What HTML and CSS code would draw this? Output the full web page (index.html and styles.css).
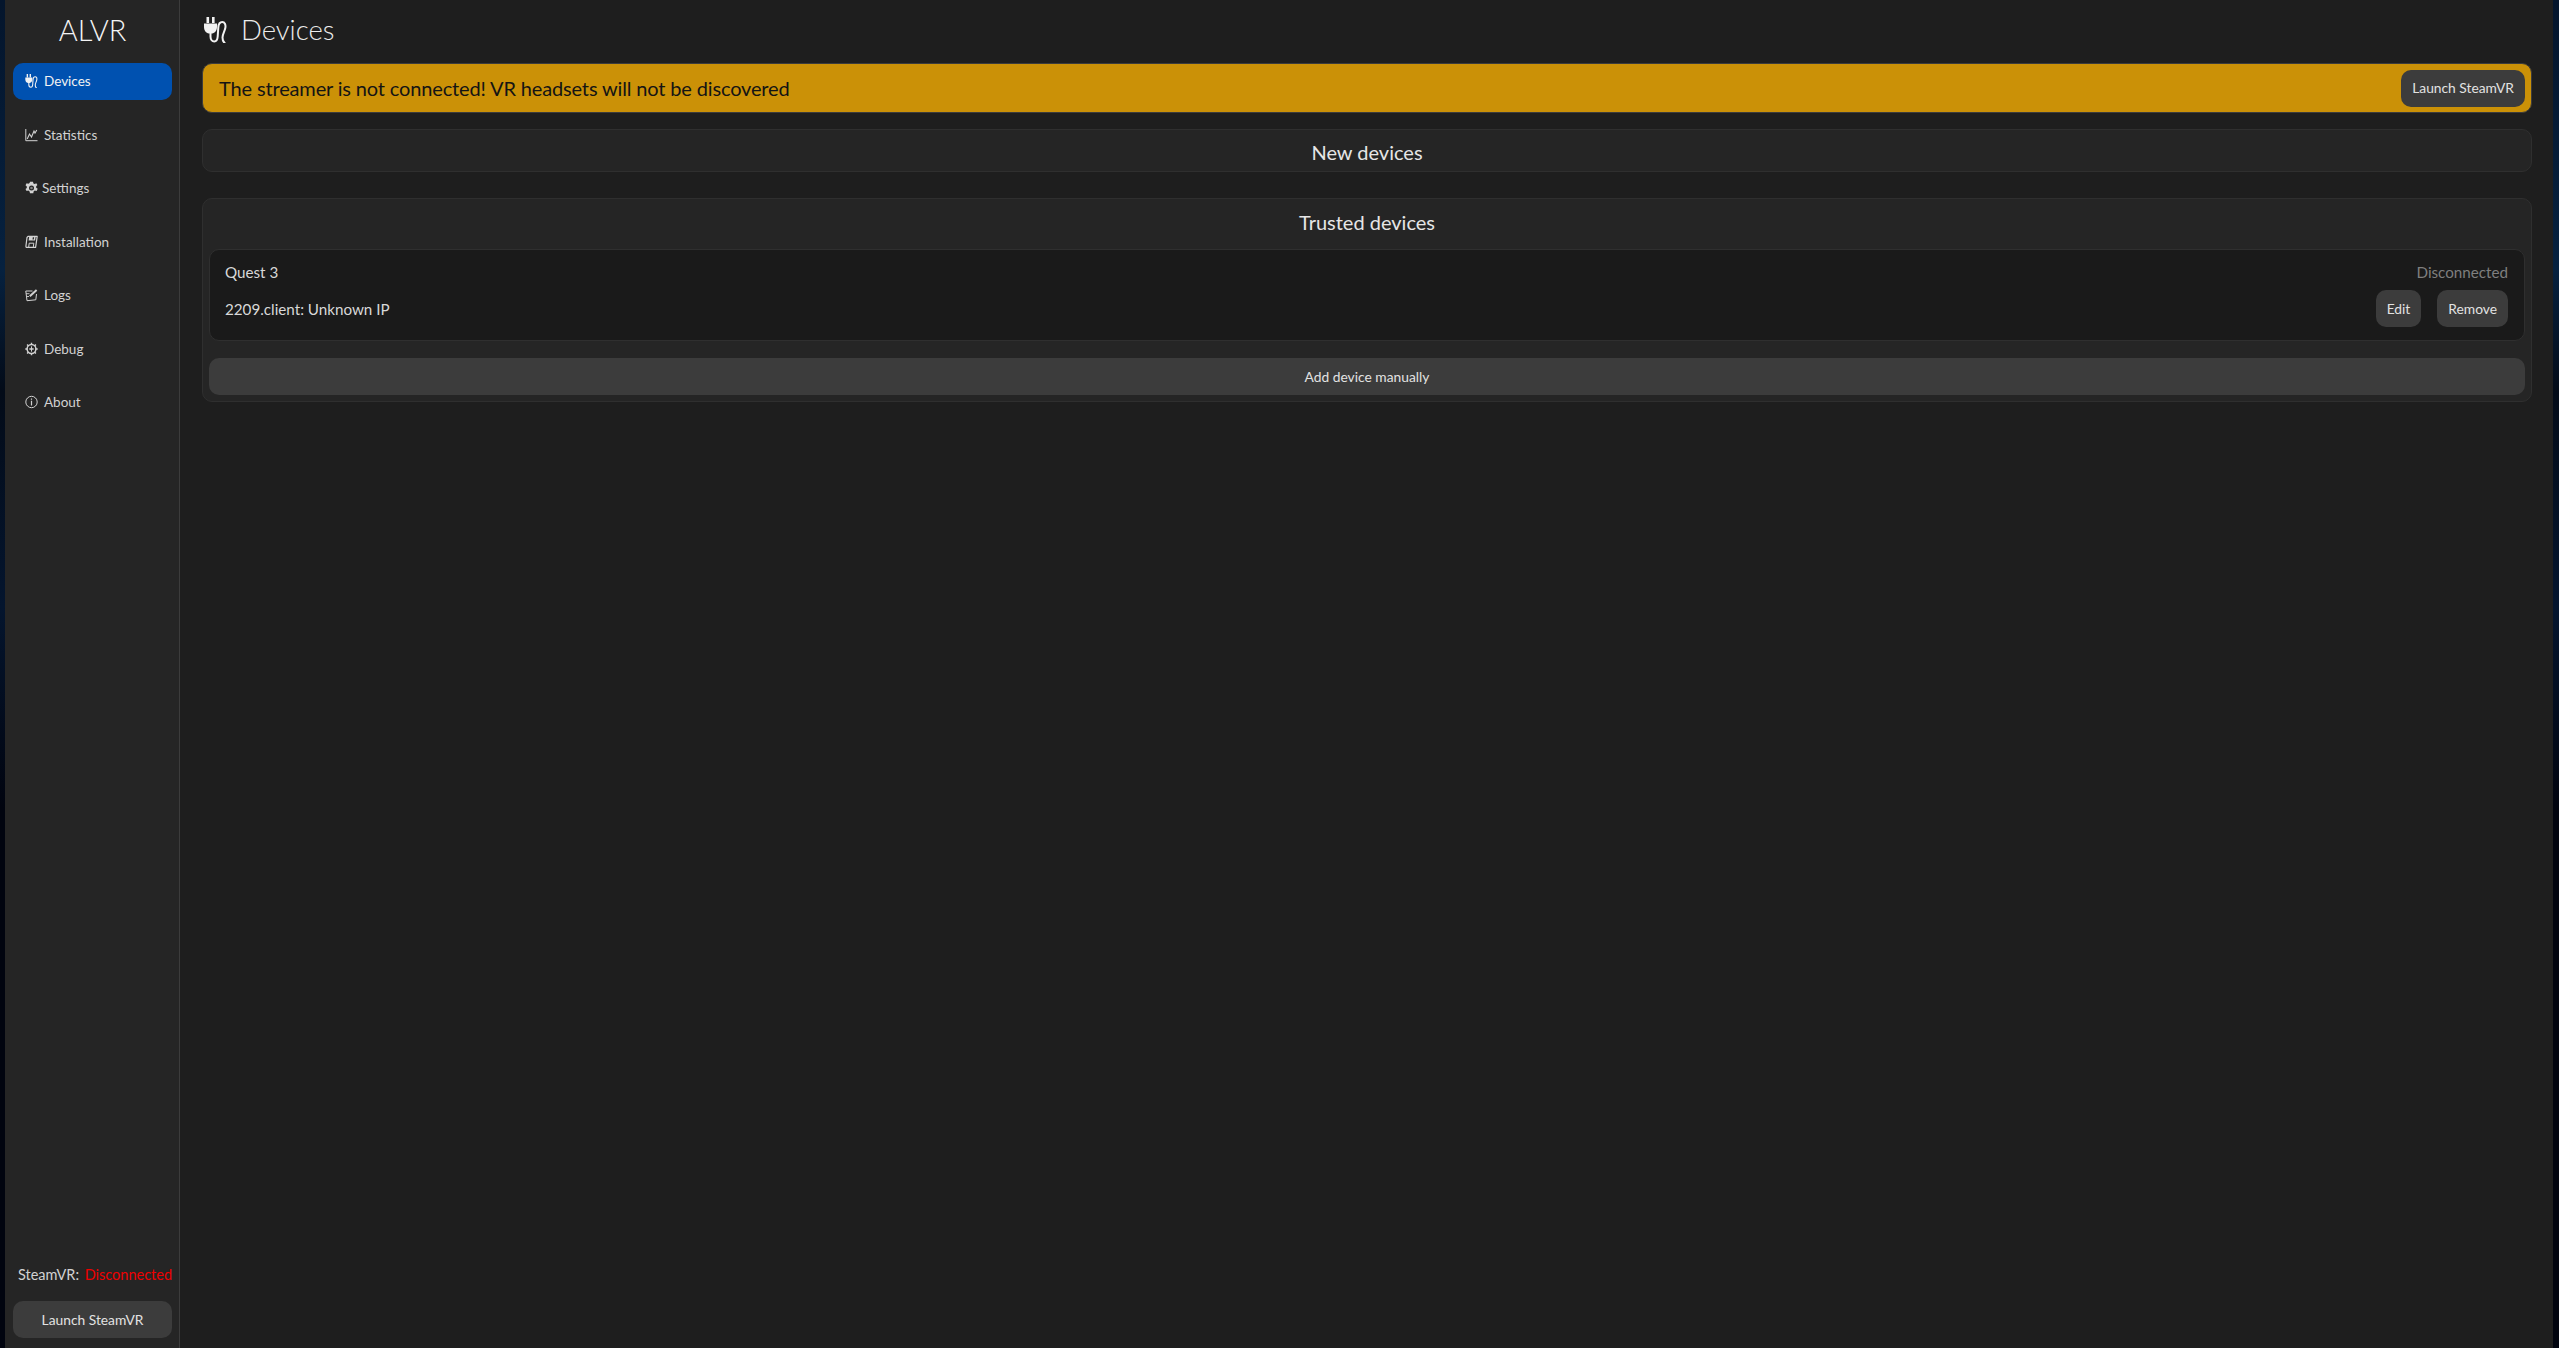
FILE: index.html
```html
<!DOCTYPE html>
<html lang="en">
<head>
<meta charset="utf-8">
<title>ALVR</title>
<link rel="stylesheet" href="styles.css">
</head>
<body>
<svg class="defs" width="0" height="0" aria-hidden="true">
  <symbol id="i-plug" viewBox="0 0 23 26">
    <path fill="currentColor" d="M2.500 0h2.600v6H2.500zM8 0h2.600v6H8zM0 6.500h13v3.500c0 3.600-2.200 6-4.800 6.500H4.800C2.200 16 0 13.600 0 10z"/>
    <path fill="none" stroke="currentColor" stroke-width="2" stroke-linecap="round" d="M6.500 16v3.500c0 3 1.700 5 3.700 5s3.300-2 3.500-5l.6-9c.2-3 1.700-5.500 4-5.500s3.700 2.500 3 6c-.7 3.500-2.800 6-2.800 9.500 0 2 .5 4.200 2.200 5.500"/>
  </symbol>
  <symbol id="i-chart" viewBox="0 0 13 13">
    <path fill="none" stroke="currentColor" d="M.8.500v11.700h11.700"/>
    <path fill="none" stroke="currentColor" stroke-width="1.100" d="M2.200 10.500 4.500 5.500l2 3L9 2.500l1 2 1.800-3"/>
  </symbol>
  <symbol id="i-gear" viewBox="0 0 13 13">
    <path fill="currentColor" fill-rule="evenodd" d="M5 .300h3l.4 1.700 1.300.6L11.300 1.700l1.100 1.900-1.200 1.200v1.500l1.500 1-1.100 2.200-1.800-.5-1.200.9-.3 1.800H5l-.4-1.800-1.300-.8-1.700.5L.5 7.500l1.300-1.100V5L.5 3.700l1.100-2 1.700.6 1.300-.7zM6.500 4a2.500 2.500 0 1 0 0 5 2.500 2.500 0 0 0 0-5z"/>
    <circle cx="6.500" cy="6.500" r="1.300" fill="currentColor" opacity=".55"/>
  </symbol>
  <symbol id="i-disk" viewBox="0 0 13 13">
    <path fill="none" stroke="currentColor" stroke-width="1.200" stroke-linejoin="round" d="M3 .9h9.200l-1.600 10.900H1.200L.9 10.800 2 2z"/>
    <path fill="currentColor" d="M4.200 1h6.500l-.6 4H3.600z"/>
    <path fill="#252525" d="M7.800 1.800h1.300l-.3 2.200H7.500z"/>
    <path fill="none" stroke="currentColor" d="M3.700 11.500l.5-3.800h4.600l-.5 3.800"/>
  </symbol>
  <symbol id="i-log" viewBox="0 0 13 13">
    <path fill="none" stroke="currentColor" stroke-linejoin="round" d="M7.500 2.500H.8l1.200 9.700 8.800-.9.700-5.800"/>
    <path fill="none" stroke="currentColor" stroke-width=".9" d="M1 5.200h3.500M2 8h2"/>
    <path fill="none" stroke="currentColor" stroke-width="2" d="M4.800 7.800 11.600 1.500"/>
  </symbol>
  <symbol id="i-bug" viewBox="0 0 13 13">
    <circle cx="6.500" cy="6.500" r="4.400" fill="none" stroke="currentColor" stroke-width="1.500"/>
    <path fill="none" stroke="currentColor" stroke-width="1.400" d="M6.500.300v2M6.500 10.700v2M.300 6.500h2M10.700 6.500h2M2.100 2.100l1.400 1.400M9.500 9.500l1.400 1.400M10.900 2.100 9.500 3.500M3.500 9.500l-1.400 1.400"/>
    <path fill="none" stroke="currentColor" d="M6.500 3.800v5.400M4 6.500h5"/>
    <circle cx="6.500" cy="6.500" r="1.200" fill="currentColor"/>
  </symbol>
  <symbol id="i-info" viewBox="0 0 13 13">
    <circle cx="6.500" cy="6.500" r="5.700" fill="none" stroke="currentColor"/>
    <path fill="currentColor" d="M5.900 3h1.200v1.300H5.900zM5.900 5.300h1.200V10H5.900z"/>
  </symbol>
</svg>
<div class="app">
  <aside class="sidebar">
    <h1 class="brand">ALVR</h1>
    <nav class="nav">
      <a class="nav-item is-active"><svg class="nav-icon"><use href="#i-plug"/></svg><span>Devices</span></a>
      <a class="nav-item"><svg class="nav-icon"><use href="#i-chart"/></svg><span>Statistics</span></a>
      <a class="nav-item nav-item-tight"><svg class="nav-icon"><use href="#i-gear"/></svg><span>Settings</span></a>
      <a class="nav-item"><svg class="nav-icon"><use href="#i-disk"/></svg><span>Installation</span></a>
      <a class="nav-item"><svg class="nav-icon"><use href="#i-log"/></svg><span>Logs</span></a>
      <a class="nav-item"><svg class="nav-icon"><use href="#i-bug"/></svg><span>Debug</span></a>
      <a class="nav-item"><svg class="nav-icon"><use href="#i-info"/></svg><span>About</span></a>
    </nav>
    <div class="sidebar-foot">
      <p class="status"><span>SteamVR:</span><span class="status-bad">Disconnected</span></p>
      <button class="btn btn-wide">Launch SteamVR</button>
    </div>
  </aside>
  <main class="main">
    <header class="page-head">
      <svg class="page-icon"><use href="#i-plug"/></svg>
      <h2 class="page-title">Devices</h2>
    </header>
    <section class="banner">
      <p class="banner-text">The streamer is not connected! VR headsets will not be discovered</p>
      <button class="btn">Launch SteamVR</button>
    </section>
    <section class="panel panel-new">
      <h3 class="panel-title">New devices</h3>
    </section>
    <section class="panel panel-trusted">
      <h3 class="panel-title">Trusted devices</h3>
      <div class="device">
        <div class="device-row">
          <span>Quest 3</span>
          <span class="muted">Disconnected</span>
        </div>
        <div class="device-row">
          <span>2209.client: Unknown IP</span>
          <div class="device-actions">
            <button class="btn">Edit</button>
            <button class="btn">Remove</button>
          </div>
        </div>
      </div>
      <button class="btn btn-full">Add device manually</button>
    </section>
  </main>
</div>
</body>
</html>
```
FILE: styles.css
```css
* { box-sizing: border-box; }
html, body { height: 100%; }
body {
  margin: 0;
  background:
    linear-gradient(180deg, #04152c 0%, #06213f 20%, #030b18 29%, #04152e 45%, #01040f 60%, #01040f 100%);
  color: #e6e6e6;
  font-family: Lato, sans-serif;
  overflow: hidden;
}
.defs { position: absolute; }
.app {
  display: flex;
  height: 100%;
  margin: 0 6px 0 5px;
  background: #1e1e1e;
}
.sidebar {
  width: 175px;
  flex: none;
  display: flex;
  flex-direction: column;
  padding: 0 7px 10px 8px;
  background: #252525;
  border-right: 1px solid #3c3c3c;
}
.brand {
  margin: 0;
  height: 63px;
  line-height: 60px;
  text-align: center;
  font-size: 29px;
  font-weight: 300;
  color: #f4f4f4;
}
.nav { display: flex; flex-direction: column; gap: 16.5px; }
.nav-item {
  display: flex;
  align-items: center;
  gap: 6px;
  height: 37px;
  padding: 0 12px 1px;
  border-radius: 10px;
  font-size: 13.5px;
  color: #d2d2d2;
}
.nav-item.is-active { background: #0051b0; color: #f2f2f2; }
.nav-item-tight { gap: 4px; }
.nav-icon { width: 13px; height: 14px; flex: none; }
.sidebar-foot { margin-top: auto; }
.status {
  display: flex;
  justify-content: space-between;
  margin: 0 0 16px;
  padding-left: 5px;
  font-size: 14.5px;
  line-height: 20px;
  white-space: nowrap;
  color: #d2d2d2;
}
.status-bad { color: #f00000; }
.btn {
  height: 37px;
  padding: 0 11px 1px;
  border: 0;
  border-radius: 10px;
  background: #3c3c3c;
  color: #e2e2e2;
  font: 400 13.8px Lato, sans-serif;
  white-space: nowrap;
}
.btn-wide { width: 100%; }
.main {
  flex: 1;
  min-width: 0;
  padding: 0 21px 0 22px;
  background: #1e1e1e;
}
.page-head {
  display: flex;
  align-items: center;
  gap: 14px;
  height: 63px;
  padding-left: 2px;
  padding-bottom: 4px;
}
.page-icon { width: 23px; height: 26px; flex: none; color: #f2f2f2; }
.page-title { margin: 0; font-size: 27.5px; font-weight: 300; color: #ececec; }
.banner {
  display: flex;
  align-items: center;
  justify-content: space-between;
  height: 50px;
  padding: 0 6px 0 16px;
  border: 1px solid #3c3c3c;
  border-radius: 10px;
  background: #cb9107;
}
.banner-text { margin: 0; font-size: 20px; letter-spacing: -0.15px; color: #141414; }
.panel {
  margin-top: 16px;
  border: 1px solid #2f2f2f;
  border-radius: 10px;
  background: #252525;
}
.panel-new { height: 43px; }
.panel-title {
  margin: 0;
  text-align: center;
  font-size: 20px;
  font-weight: 400;
  line-height: 45px;
  color: #e6e6e6;
}
.panel-trusted {
  margin-top: 26px;
  height: 204px;
  padding: 0 6px;
}
.panel-trusted .panel-title { height: 50px; line-height: 46px; }
.device {
  display: flex;
  flex-direction: column;
  height: 92px;
  padding: 7px 16px 0 15px;
  border: 1px solid #2f2f2f;
  border-radius: 10px;
  background: #1a1a1a;
  font-size: 15.2px;
  color: #d8d8d8;
}
.device-row {
  display: flex;
  align-items: center;
  justify-content: space-between;
}
.device-row:first-child { height: 30px; }
.device-row + .device-row { margin-top: 3px; }
.muted { color: #7f7f7f; }
.device-actions { display: flex; gap: 16px; }
.btn-full { display: block; width: 100%; margin-top: 17px; }
```
